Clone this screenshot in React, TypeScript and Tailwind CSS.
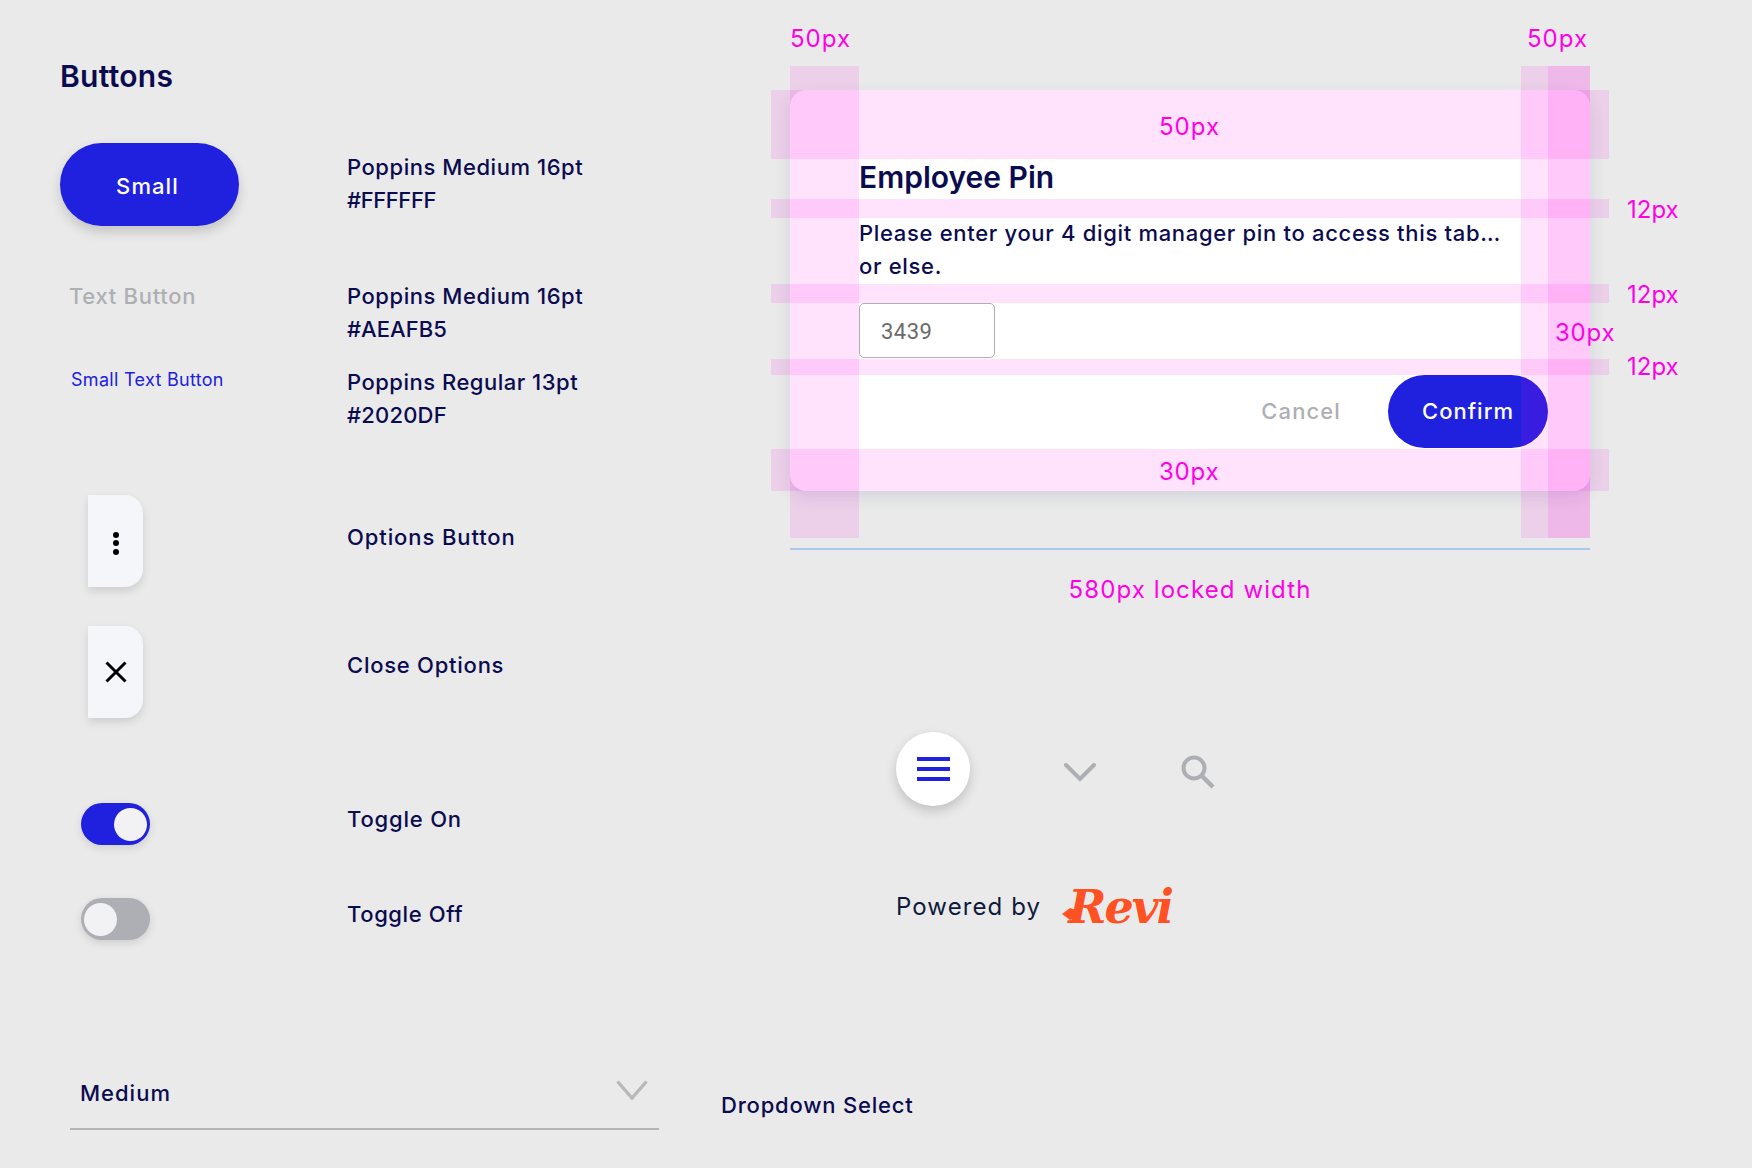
import React from "react";

const Label = ({ children, className = "" }: { children: React.ReactNode; className?: string }) => (
  <p className={`text-[22px] leading-[33px] font-medium text-[#0b0b4f] ${className}`}>{children}</p>
);

const Anno = ({ children, className = "" }: { children: React.ReactNode; className?: string }) => (
  <span className={`absolute text-[24px] leading-[32px] whitespace-nowrap text-[#ff00e6] ${className}`}>{children}</span>
);

const Strip = ({ className }: { className: string }) => (
  <div className={`absolute bg-[#ff00e6]/11 ${className}`} />
);

function Toggle({ on }: { on: boolean }) {
  return (
    <div
      className={`flex h-[42px] w-[69px] items-center rounded-full px-[3px] shadow-[0_3px_8px_rgba(0,0,0,0.12)] ${
        on ? "justify-end bg-[#2020df]" : "justify-start bg-[#aeafb5]"
      }`}
    >
      <div className="h-[33px] w-[33px] rounded-full bg-[#f2f2f4]" />
    </div>
  );
}

function OptionBox({ children }: { children: React.ReactNode }) {
  return (
    <div className="ml-[28px] flex h-[92px] w-[55px] items-center justify-center rounded-r-[18px] bg-[#f5f6fa] shadow-[0_4px_8px_rgba(0,0,0,0.12)]">
      {children}
    </div>
  );
}

export default function App() {
  return (
    <div className="flex h-[1168px] w-[1752px] flex-col overflow-hidden bg-[#eaeaea] font-[Inter,sans-serif]">
      <div className="flex h-[1074px]">
        {/* left column */}
        <div className="w-[700px] pl-[60px] pt-[56px]">
          <h1 className="text-[30px] leading-[40px] font-semibold tracking-[0.3px] text-[#0b0b4f]">Buttons</h1>

          <div className="mt-[47px] flex h-[83px]">
            <div className="w-[287px]">
              <button className="flex h-[83px] w-[179px] items-center justify-center rounded-[42px] bg-[#2020df] pt-[3px] pr-[4px] text-[22px] font-medium tracking-[1.1px] text-white shadow-[0_6px_12px_rgba(0,0,0,0.16)]">
                Small
              </button>
            </div>
            <Label className="mt-[8px] tracking-[0.55px]">
              Poppins Medium 16pt
              <br />
              <span className="tracking-[-0.4px]">#FFFFFF</span>
            </Label>
          </div>

          <div className="mt-[54px] flex h-[66px]">
            <div className="w-[287px] pl-[9px] text-[22px] leading-[33px] font-medium tracking-[0.7px] text-[#aeafb5]">Text Button</div>
            <Label className="tracking-[0.55px]">
              Poppins Medium 16pt
              <br />
              <span className="tracking-[0.05px]">#AEAFB5</span>
            </Label>
          </div>

          <div className="mt-[20px] flex h-[66px]">
            <div className="w-[287px] pl-[11px] text-[18px] leading-[28px] tracking-[0.3px] text-[#2020df]">Small Text Button</div>
            <Label className="tracking-[0.5px]">
              Poppins Regular 13pt
              <br />
              <span className="tracking-[0.2px]">#2020DF</span>
            </Label>
          </div>

          <div className="mt-[63px] flex h-[92px]">
            <div className="w-[287px]">
              <OptionBox>
                <div className="mt-[4px] flex flex-col gap-[2.5px]">
                  <span className="h-[6px] w-[6px] rounded-full bg-black" />
                  <span className="h-[6px] w-[6px] rounded-full bg-black" />
                  <span className="h-[6px] w-[6px] rounded-full bg-black" />
                </div>
              </OptionBox>
            </div>
            <Label className="mt-[26px] tracking-[0.9px]">Options Button</Label>
          </div>

          <div className="mt-[39px] flex h-[92px]">
            <div className="w-[287px]">
              <OptionBox>
                <svg width="22" height="22" viewBox="0 0 22 22">
                  <path d="M1.5 1.5 20.5 20.5M20.5 1.5 1.5 20.5" stroke="#000" strokeWidth="3" fill="none" />
                </svg>
              </OptionBox>
            </div>
            <Label className="mt-[23px] tracking-[0.75px]">Close Options</Label>
          </div>

          <div className="mt-[85px] flex h-[42px]">
            <div className="w-[287px] pl-[21px]">
              <Toggle on />
            </div>
            <Label className="tracking-[0.8px]">Toggle On</Label>
          </div>

          <div className="mt-[53px] flex h-[42px]">
            <div className="w-[287px] pl-[21px]">
              <Toggle on={false} />
            </div>
            <Label className="tracking-[0.6px]">Toggle Off</Label>
          </div>
        </div>

        {/* right column */}
        <div className="relative w-[800px] pt-[90px] pl-[90px] box-content">
          <Anno className="left-[90px] top-[23px] tracking-[1px]">50px</Anno>
          <Anno className="left-[827px] top-[23px] tracking-[1px]">50px</Anno>

          <div className="relative h-[401px] w-[800px] rounded-[16px] bg-white pl-[69px] pr-[42px] pt-[67px] shadow-[0_6px_16px_rgba(40,60,120,0.12)]">
            <h2 className="text-[30px] leading-[40px] font-semibold tracking-[0px] text-[#0b0b4f]">Employee Pin</h2>
            <p className="mt-[20px] text-[22px] leading-[33px] font-medium tracking-[0.68px] text-[#0b0b4f]">
              Please enter your 4 digit manager pin to access this tab…
              <br />
              or else.
            </p>
            <div className="mt-[20px] flex h-[55px] w-[136px] items-center rounded-[5px] border border-[#aeafb5] bg-white pl-[21px] pt-[2px] font-[Roboto,sans-serif] text-[22px] tracking-[0.5px] text-[#6a6a6a]">
              3439
            </div>
            <div className="mt-[17px] flex h-[73px] items-center justify-end">
              <span className="mr-[47px] text-[22px] font-medium tracking-[1.1px] text-[#aeafb5]">Cancel</span>
              <button className="h-[73px] w-[160px] rounded-[37px] bg-[#2020df] text-[22px] font-medium tracking-[1px] text-white">
                Confirm
              </button>
            </div>

            <Strip className="-left-[19px] top-0 h-[69px] w-[838px]" />
            <Strip className="-left-[19px] top-[109px] h-[19px] w-[838px]" />
            <Strip className="-left-[19px] top-[194px] h-[19px] w-[838px]" />
            <Strip className="-left-[19px] top-[269px] h-[16px] w-[838px]" />
            <Strip className="-left-[19px] top-[359px] h-[42px] w-[838px]" />
            <Strip className="left-0 -top-[24px] h-[472px] w-[69px]" />
            <Strip className="left-[731px] -top-[24px] h-[472px] w-[69px]" />
            <Strip className="left-[758px] -top-[24px] h-[472px] w-[42px]" />

            <Anno className="left-[369px] top-[21px] tracking-[1px]">50px</Anno>
            <Anno className="left-[837px] top-[104px]">12px</Anno>
            <Anno className="left-[837px] top-[189px]">12px</Anno>
            <Anno className="left-[765px] top-[227px] tracking-[0.8px]">30px</Anno>
            <Anno className="left-[837px] top-[261px]">12px</Anno>
            <Anno className="left-[369px] top-[366px] tracking-[0.8px]">30px</Anno>
          </div>

          <div className="mt-[57px] h-[2px] w-[800px] bg-[#a8c8ee]" />
          <p className="mt-[24px] w-[800px] text-center text-[24px] leading-[32px] tracking-[1.1px] text-[#ff00e6]">580px locked width</p>

          <div className="mt-[126px] ml-[106px] flex items-center">
            <div className="flex h-[74px] w-[74px] flex-col items-center justify-center gap-[6px] rounded-full bg-white shadow-[0_5px_12px_rgba(0,0,0,0.18)]">
              <span className="h-[4px] w-[33px] bg-[#2020df]" />
              <span className="h-[4px] w-[33px] bg-[#2020df]" />
              <span className="h-[4px] w-[33px] bg-[#2020df]" />
            </div>
            <svg width="32" height="19" viewBox="0 0 32 19" className="ml-[94px] mt-[6px]">
              <path d="M2 2 16 16 30 2" stroke="#aeafb5" strokeWidth="4" fill="none" strokeLinecap="round" />
            </svg>
            <svg width="34" height="34" viewBox="0 0 34 34" className="ml-[85px] mt-[6px]">
              <circle cx="13" cy="13" r="10.5" stroke="#aeafb5" strokeWidth="4" fill="none" />
              <path d="M21 21 32 32" stroke="#aeafb5" strokeWidth="4.5" fill="none" />
            </svg>
          </div>

          <div className="mt-[77px] ml-[106px] flex items-center">
            <span className="text-[24px] leading-[36px] tracking-[1.1px] text-[#101a3c]">Powered by</span>
            <div className="relative ml-[21px] flex items-center pl-[6px]">
              <svg width="14" height="12" viewBox="0 0 14 12" className="absolute left-0 top-[25px]">
                <path d="M0 6 8 0 14 2V10L8 12Z" fill="#ff5122" />
              </svg>
              <span className="font-['DejaVu_Serif',serif] text-[46px] leading-[48px] font-bold italic tracking-[-2px] text-[#ff5122]">
                Revi
              </span>
            </div>
          </div>
        </div>
      </div>

      {/* dropdown row */}
      <div className="flex pl-[70px]">
        <div className="flex h-[56px] w-[589px] items-start justify-between border-b-2 border-[#b4b4b4] pl-[10px] pr-[11px]">
          <span className="mt-[3px] text-[22px] leading-[33px] font-medium tracking-[1px] text-[#0b0b4f]">Medium</span>
          <svg width="32" height="20" viewBox="0 0 32 20" className="mt-[6px]">
            <path d="M1.5 1.5 16 18 30.5 1.5" stroke="#b8b8ba" strokeWidth="3.4" fill="none" />
          </svg>
        </div>
        <Label className="ml-[62px] mt-[15px] tracking-[0.8px]">Dropdown Select</Label>
      </div>
    </div>
  );
}
